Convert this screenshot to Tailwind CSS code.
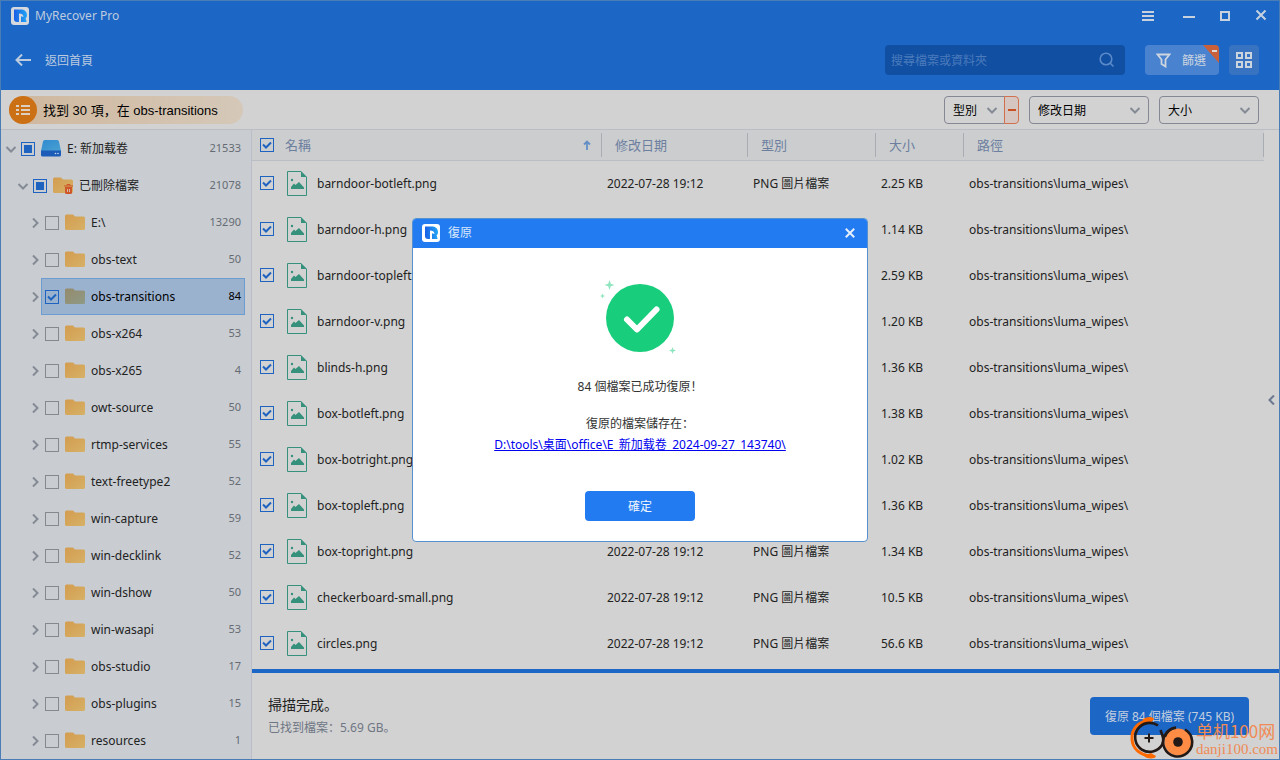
<!DOCTYPE html>
<html lang="zh-Hant">
<head>
<meta charset="utf-8">
<meta name="viewport" content="width=device-width, initial-scale=1">
<title>MyRecover Pro</title>
<script src="https://cdn.jsdelivr.net/npm/@tailwindcss/browser@4"></script>
</head>
<body class="relative flex min-h-screen flex-col border border-[#4a7cb5] bg-[#d2d2d2] font-['Noto_Sans','Noto_Sans_CJK_SC',sans-serif] text-[12px] text-[#222]">

<svg class="absolute size-0" aria-hidden="true">
  <defs>
    <linearGradient id="gLogo" x1="0" y1="0" x2="1" y2="0"><stop offset="0" stop-color="#1b5fe6"/><stop offset="1" stop-color="#22a6f5"/></linearGradient>
    <linearGradient id="gFolder" x1="0" y1="0" x2="1" y2="1"><stop offset="0" stop-color="#d39c4f"/><stop offset="1" stop-color="#d6b167"/></linearGradient>
    <linearGradient id="gFolderSel" x1="0" y1="0" x2="1" y2="1"><stop offset="0" stop-color="#948a6c"/><stop offset="1" stop-color="#8f9a85"/></linearGradient>
    <linearGradient id="gDrive" x1="0" y1="0" x2="1" y2="1"><stop offset="0" stop-color="#2f8bd0"/><stop offset="1" stop-color="#4aa0d2"/></linearGradient>
    <symbol id="logo" viewBox="0 0 18 18"><rect width="18" height="18" rx="3" fill="currentColor"/><path d="M3 2.500h8a5.500 5.500 0 0 1 5 5.500c0 1.500-.5 2.500-1.500 3.500.5 1 1 2 1 3.500H6a3 3 0 0 1-3-3z" fill="url(#gLogo)"/><path d="M8 6.500c2.500 0 4.500 1 4.500 3.500l-2.500-.8V16H8z" fill="currentColor"/></symbol>
    <symbol id="folder" viewBox="0 0 20 17"><path d="M0 2a1.500 1.500 0 0 1 1.500-1.500H8L10 2.500h8.500A1.500 1.500 0 0 1 20 4v10.500a1.500 1.500 0 0 1-1.500 1.500h-17A1.500 1.500 0 0 1 0 14.500z" fill="url(#gFolder)"/></symbol>
    <symbol id="folderSel" viewBox="0 0 20 17"><path d="M0 2a1.500 1.500 0 0 1 1.500-1.500H8L10 2.500h8.500A1.500 1.500 0 0 1 20 4v10.500a1.500 1.500 0 0 1-1.500 1.500h-17A1.500 1.500 0 0 1 0 14.500z" fill="url(#gFolderSel)"/></symbol>
    <symbol id="deleted" viewBox="0 0 20 17"><path d="M0 2a1.500 1.500 0 0 1 1.500-1.500H8L10 2.500h8.500A1.500 1.500 0 0 1 20 4v10.500a1.500 1.500 0 0 1-1.500 1.500h-17A1.500 1.500 0 0 1 0 14.500z" fill="url(#gFolder)"/><path d="M11 9h9M14 9V7.500h3V9" fill="none" stroke="#cf5629"/><path d="M12 10h7v5.500a1.500 1.500 0 0 1-1.500 1.500h-4a1.500 1.500 0 0 1-1.500-1.500z" fill="#cf5629"/><path d="M14.500 12v3M16.500 12v3" stroke="#d9b8a5"/></symbol>
    <symbol id="drive" viewBox="0 0 20 17"><path d="M4 0h12a2 2 0 0 1 2 1.500l2 9.500H0L2 1.500A2 2 0 0 1 4 0z" fill="url(#gDrive)"/><path d="M0 10.500h20V15a1.500 1.500 0 0 1-1.500 1.500h-17A1.500 1.500 0 0 1 0 15z" fill="#1c5cb8"/><circle cx="14.500" cy="13.500" r=".8" fill="#ccd9e8"/><circle cx="17" cy="13.500" r=".8" fill="#ccd9e8"/></symbol>
    <symbol id="file" viewBox="0 0 20 25"><path d="M14 .5H.5v24h19V6" fill="none" stroke="#35907c"/><path d="M14 0v6h6z" fill="#35907c"/><circle cx="5" cy="9" r="1.200" fill="#35907c"/><path d="M4 18v-2l3-3.500 1.500 1.500L12 11l5 5.500V18z" fill="#35907c"/></symbol>
    <symbol id="tick" viewBox="0 0 14 14"><path d="M3 6.500 6 9.500l5-5" fill="none" stroke="#1f63c0" stroke-width="2"/></symbol>
    <symbol id="right" viewBox="0 0 12 12"><path d="m4 1.500 4.500 4.500L4 10.500" fill="none" stroke="#858b94" stroke-width="2"/></symbol>
    <symbol id="down" viewBox="0 0 12 12"><path d="M1.500 4 6 8.500 10.500 4" fill="none" stroke="#858b94" stroke-width="2"/></symbol>
  </defs>
</svg>

<header class="bg-[#1c66c6] text-[#cdd5df]">
  <div class="flex h-[29px] items-center gap-[6px] pr-3 pl-[10px]">
    <svg class="size-[18px] text-[#d5d9dd]"><use href="#logo"/></svg>
    <span class="text-[#bccbde]">MyRecover Pro</span>
    <nav class="ml-auto flex items-center gap-6 text-[#c8d2df]">
      <button aria-label="選單"><svg class="block size-3" viewBox="0 0 12 12"><path d="M0 2h12M0 6h12M0 10h12" stroke="currentColor" stroke-width="2"/></svg></button>
      <button class="ml-[5px]" aria-label="最小化"><svg class="block size-3" viewBox="0 0 12 12"><path d="M0 7h12" stroke="currentColor" stroke-width="2"/></svg></button>
      <button aria-label="最大化"><svg class="block size-3" viewBox="0 0 12 12"><path d="M2 2h8v8H2z" fill="none" stroke="currentColor" stroke-width="2"/></svg></button>
      <button aria-label="關閉"><svg class="block size-3" viewBox="0 0 12 12"><path d="m1.500 .5 9 9m0-9-9 9" stroke="currentColor" stroke-width="2"/></svg></button>
    </nav>
  </div>
  <div class="flex h-[60px] items-center pr-5 pl-[14px]">
    <button class="flex items-center gap-[14px] text-[#bccbde]">
      <svg class="h-3 w-4" viewBox="0 0 16 12"><path d="M16 6H1.500M7 .5 1.500 6 7 11.500" fill="none" stroke="currentColor" stroke-width="2"/></svg>
      <span class="pt-[2px]">返回首頁</span>
    </button>
    <label class="ml-auto flex h-[30px] w-60 items-center rounded bg-[#114fa3] pr-[10px] pl-[6px]">
      <input type="text" aria-label="搜尋檔案或資料夾" placeholder="搜尋檔案或資料夾" class="min-w-0 flex-1 bg-transparent pt-[2px] text-[12px] outline-none placeholder:text-[#4b7bbb]">
      <svg class="size-4" viewBox="0 0 16 16"><circle cx="7" cy="7" r="5.800" fill="none" stroke="#5a8ac8" stroke-width="1.600"/><path d="m11 11 3.500 3.500" stroke="#5a8ac8" stroke-width="1.600"/></svg>
    </label>
    <button class="relative ml-5 flex h-[30px] w-[74px] items-center gap-[11px] overflow-hidden rounded bg-[#4983d0] pl-[11px]">
      <svg class="size-[15px]" viewBox="0 0 15 15"><path d="M1.500 1.500h12L9.500 6.500v7l-4-2.500V6.500z" fill="none" stroke="#cdd5df" stroke-width="1.800"/></svg>
      <span class="pt-[2px]">篩選</span>
      <svg class="absolute top-0 right-0 h-[18px] w-4" viewBox="0 0 16 18"><path d="M0 0h16v18z" fill="#c9603a"/><path d="M9 6h5" stroke="#dcd8d6" stroke-width="2"/></svg>
    </button>
    <button class="ml-[10px] grid size-[30px] place-items-center rounded bg-[#3773c0]" aria-label="檢視">
      <svg class="size-4" viewBox="0 0 16 16"><path d="M1 1h5v5H1zM10 1h5v5h-5zM1 10h5v5H1zM10 10h5v5h-5z" fill="none" stroke="#ccd4de" stroke-width="2"/></svg>
    </button>
  </div>
</header>

<section class="flex h-10 items-center gap-[10px] border-b border-[#babdc4] pr-5 pl-2 text-black">
  <div class="mr-auto flex h-7 w-[234px] items-center gap-[6px] rounded-full bg-linear-to-r from-[#cfb79d] to-[#d5c8b8] whitespace-nowrap">
    <span class="grid size-7 place-items-center rounded-full bg-[#cb7015]"><svg class="h-3 w-[14px]" viewBox="0 0 14 12"><path d="M0 2h3M5 2h9M0 6h3M5 6h9M0 10h3M5 10h9" stroke="#ddd0c2" stroke-width="2"/></svg></span>
    <span lang="zh-Hans" class="pt-[2px] font-['Liberation_Sans','Noto_Sans_CJK_SC',sans-serif] text-[13px]">找到 30 項，在 obs-transitions</span>
  </div>
  <div class="flex h-7">
    <label class="grid w-[61px] items-center rounded-l border border-[#858795]">
      <select aria-label="型別" class="h-full w-full appearance-none bg-transparent pt-[2px] pl-2 [grid-area:1/1]"><option>型別</option></select>
      <svg class="pointer-events-none mr-[6px] size-3 justify-self-end [grid-area:1/1]"><use href="#down"/></svg>
    </label>
    <button aria-label="清除篩選" class="-ml-px grid w-[15px] place-items-center rounded-r border border-[#d0704c] bg-[#d6c6c2]"><svg class="h-[2px] w-2"><path d="M0 1h8" stroke="#c9501f" stroke-width="2"/></svg></button>
  </div>
  <label class="grid h-7 w-[120px] items-center rounded border border-[#858795]">
    <select aria-label="修改日期" class="h-full w-full appearance-none bg-transparent pt-[2px] pl-2 [grid-area:1/1]"><option>修改日期</option></select>
    <svg class="pointer-events-none mr-[7px] size-3 justify-self-end [grid-area:1/1]"><use href="#down"/></svg>
  </label>
  <label class="grid h-7 w-[100px] items-center rounded border border-[#858795]">
    <select aria-label="大小" class="h-full w-full appearance-none bg-transparent pt-[2px] pl-2 [grid-area:1/1]"><option>大小</option></select>
    <svg class="pointer-events-none mr-[7px] size-3 justify-self-end [grid-area:1/1]"><use href="#down"/></svg>
  </label>
</section>

<div class="flex flex-1">
  <aside id="tree" class="w-[251px] shrink-0 border-r border-[#bbbdc8] bg-[#c9cdd2]"></aside>

  <main class="flex min-w-0 flex-1 flex-col">
    <div class="flex flex-1">
      <table class="min-w-0 flex-1 table-fixed self-start border-collapse text-left">
        <colgroup><col class="w-[350px]"><col class="w-[146px]"><col class="w-[128px]"><col class="w-[88px]"><col></colgroup>
        <thead class="h-[30px] border-b border-[#b9bdc4] bg-[#cbcdcf] text-[13px] text-[#6d7f9f]">
          <tr>
            <th class="p-0 font-normal"><div class="flex h-6 items-center border-r border-[#a9adb3] pr-[10px] pl-2">
              <span class="mr-[11px] grid size-[14px]"><input type="checkbox" checked aria-label="全選" class="size-[14px] appearance-none border border-[#1f63c0] [grid-area:1/1]"><svg class="pointer-events-none size-[14px] [grid-area:1/1]"><use href="#tick"/></svg></span>
              <span class="pt-[2px]">名稱</span>
              <svg class="ml-auto h-[10px] w-2" viewBox="0 0 8 10"><path d="M4 10V1M1 4.500 4 1.500l3 3" fill="none" stroke="#6490c6" stroke-width="1.800"/></svg>
            </div></th>
            <th class="p-0 font-normal"><div class="flex h-6 items-center border-r border-[#a9adb3] pt-[2px] pl-[13px]">修改日期</div></th>
            <th class="p-0 font-normal"><div class="flex h-6 items-center border-r border-[#a9adb3] pt-[2px] pl-[13px]">型別</div></th>
            <th class="p-0 font-normal"><div class="flex h-6 items-center border-r border-[#a9adb3] pt-[2px] pl-[13px]">大小</div></th>
            <th class="p-0 font-normal"><div class="flex h-6 items-center border-r border-[#a9adb3] pt-[2px] pl-[13px]">路徑</div></th>
          </tr>
        </thead>
        <tbody id="files"></tbody>
      </table>
      <button aria-label="展開面板" class="grid w-[15px] shrink-0 place-items-center"><svg class="h-[10px] w-[7px]" viewBox="0 0 7 10"><path d="M6 .5 1.500 5 6 9.500" fill="none" stroke="#6b7890" stroke-width="2"/></svg></button>
    </div>
    <footer class="flex h-[90px] items-center justify-between border-t-4 border-[#1c66c6] pr-[30px] pl-4">
      <div lang="zh-Hans">
        <p class="text-[14px] leading-6">掃描完成。</p>
        <p class="leading-[22px] text-[#6f7684]">已找到檔案：5.69 GB。</p>
      </div>
      <button class="h-[38px] w-[159px] rounded bg-[#1c66c6] pt-[2px] text-[#c3cede]">復原 84 個檔案 (745 KB)</button>
    </footer>
  </main>
</div>

<div class="pointer-events-none absolute right-0 bottom-0 flex items-end">
  <svg class="h-[42px] w-[66px]" viewBox="0 0 66 42">
    <path d="M19 3.500C8 5 1.500 12 2 22c.5 10 8 16 19 17" fill="none" stroke="#ff6a00" stroke-width="3"/>
    <path d="M12 3c4-3.500 10-4 12-1l-3 4zM14 39.500c4 2.500 11 3 12-.5l-5-3z" fill="#ff6a00"/>
    <path d="M28 8.500A14.500 14.500 0 1 0 32 28c1.500-3 1.500-6 1-9" fill="none" stroke="#231916" stroke-width="2.600"/>
    <path d="M19 16.500v9M14.500 21h9" stroke="#231916" stroke-width="2"/>
    <circle cx="48" cy="25" r="13.500" fill="#ff8c44"/>
    <path d="M46 10.600A14.500 14.500 0 1 0 55 12.500M46 10.500c-5 1-9 4-11 9M30.500 13c1 3 2 6 3 8" fill="none" stroke="#231916" stroke-width="2.600"/>
    <circle cx="48" cy="25" r="4.800" fill="#231916"/>
  </svg>
  <div class="pr-px pb-[2px] text-[#f08a55]">
    <p class="font-['Noto_Sans_CJK_SC',sans-serif] text-[17px] leading-5">单机100网</p>
    <p class="font-['Liberation_Serif',serif] text-[15px] leading-4">danji100.com</p>
  </div>
</div>

<div class="fixed inset-0 flex items-center justify-center">
  <div role="dialog" aria-labelledby="dlgTitle" class="w-[456px] overflow-hidden rounded border border-[#5590d0] bg-white text-center text-[#333]">
    <div class="flex h-[29px] items-center gap-2 bg-[#227bf0] pr-3 pb-[2px] pl-[9px]">
      <svg class="size-[18px] text-white"><use href="#logo"/></svg>
      <h2 id="dlgTitle" class="text-[#d9e8fc]">復原</h2>
      <button aria-label="關閉" class="ml-auto text-[#e6effc]"><svg class="block size-[10px]" viewBox="0 0 10 10"><path d="m.8.800 8.400 8.400m0-8.400L.8 9.200" stroke="currentColor" stroke-width="2"/></svg></button>
    </div>
    <div lang="zh-Hans" class="flex flex-col items-center pt-8 pb-5">
      <svg class="h-[76px] w-20" viewBox="0 0 80 76">
        <circle cx="40" cy="38" r="34" fill="#18cd7b"/>
        <path d="m27 39.500 10 10L56.500 29.500" fill="none" stroke="#fff" stroke-width="6" stroke-linecap="round" stroke-linejoin="round"/>
        <path d="M9.500 0l1.300 3.700 3.700 1.300-3.700 1.300L9.500 10l-1.300-3.700L4.500 5l3.700-1.300zM2.500 13.500l.7 1.800 1.800.7-1.800.7-.7 1.800-.7-1.800L0 16l1.800-.7zM72.500 67l.9 2.600 2.600.9-2.600.9-.9 2.600-.9-2.600-2.600-.9 2.600-.9z" fill="#8fe5bf"/>
      </svg>
      <p class="mt-[21px] leading-5">84 個檔案已成功復原！</p>
      <p class="mt-[17px] leading-5">復原的檔案儲存在：</p>
      <a href="#" class="mt-px leading-5 text-[#0000ee] underline">D:\tools\桌面\office\E_新加载卷_2024-09-27_143740\</a>
      <button class="mt-9 h-[30px] w-[110px] rounded bg-[#227bf0] pt-[2px] text-[#f0f6ff]">確定</button>
    </div>
  </div>
</div>

<script>
const nodes = [
  [0, 'E: 新加载卷', 21533], [1, '已刪除檔案', 21078], [2, 'E:\\', 13290], [2, 'obs-text', 50],
  [2, 'obs-transitions', 84], [2, 'obs-x264', 53], [2, 'obs-x265', 4], [2, 'owt-source', 50],
  [2, 'rtmp-services', 55], [2, 'text-freetype2', 52], [2, 'win-capture', 59], [2, 'win-decklink', 52],
  [2, 'win-dshow', 50], [2, 'win-wasapi', 53], [2, 'obs-studio', 17], [2, 'obs-plugins', 15], [2, 'resources', 1]
];
const indent = ['pl-1', 'pl-4', 'pl-7'];
document.getElementById('tree').innerHTML = nodes.map(([d, name, n]) => {
  const sel = name === 'obs-transitions';
  const icon = d === 0 ? 'drive' : d === 1 ? 'deleted' : sel ? 'folderSel' : 'folder';
  const box = d < 2
    ? '<input type="checkbox" aria-label="' + name + '" class="size-[14px] appearance-none border border-[#1f63c0] [grid-area:1/1]"><i class="pointer-events-none m-[3px] size-2 bg-[#1f63c0] [grid-area:1/1]"></i>'
    : sel
    ? '<input type="checkbox" checked aria-label="' + name + '" class="size-[14px] appearance-none border border-[#1f63c0] [grid-area:1/1]"><svg class="pointer-events-none size-[14px] [grid-area:1/1]"><use href="#tick"/></svg>'
    : '<input type="checkbox" aria-label="' + name + '" class="size-[14px] appearance-none border border-[#85888d] [grid-area:1/1]">';
  return `<div class="flex h-[37px] items-center ${indent[d]}">
    <button aria-label="展開 ${name}" class="w-3"><svg class="block size-3"><use href="#${d < 2 ? 'down' : 'right'}"/></svg></button>
    <div class="mr-[6px] flex h-full flex-1 items-center gap-[6px] border pr-[3px] pl-[3px] ${sel ? 'border-[#6c9dd0] bg-[#9bb2cf] text-black' : 'border-transparent'}">
      <span class="grid size-[14px]">${box}</span>
      <svg class="h-[17px] w-5"><use href="#${icon}"/></svg>
      <span>${name}</span>
      <span class="ml-auto text-[11px] ${sel ? 'text-black' : 'text-[#666b73]'}">${n}</span>
    </div>
  </div>`;
}).join('');

const files = [
  ['barndoor-botleft.png', '2.25 KB'], ['barndoor-h.png', '1.14 KB'], ['barndoor-topleft.png', '2.59 KB'],
  ['barndoor-v.png', '1.20 KB'], ['blinds-h.png', '1.36 KB'], ['box-botleft.png', '1.38 KB'],
  ['box-botright.png', '1.02 KB'], ['box-topleft.png', '1.36 KB'], ['box-topright.png', '1.34 KB'],
  ['checkerboard-small.png', '10.5 KB'], ['circles.png', '56.6 KB']
];
document.getElementById('files').innerHTML = files.map(([name, size]) => `<tr class="h-[46px]">
  <td class="p-0"><label class="flex items-center pl-2">
    <span class="mr-[13px] grid size-[14px]"><input type="checkbox" checked class="size-[14px] appearance-none border border-[#1f63c0] [grid-area:1/1]"><svg class="pointer-events-none size-[14px] [grid-area:1/1]"><use href="#tick"/></svg></span>
    <svg class="mr-[10px] h-[25px] w-5"><use href="#file"/></svg><span class="pt-[2px]">${name}</span></label></td>
  <td class="p-0 pt-[2px] pl-[5px]">2022-07-28 19:12</td>
  <td class="p-0 pt-[2px] pl-[5px]">PNG 圖片檔案</td>
  <td class="p-0 pt-[2px] pl-[5px]">${size}</td>
  <td class="p-0 pt-[2px] pl-[5px]">obs-transitions\\luma_wipes\\</td>
</tr>`).join('');
</script>
</body>
</html>
